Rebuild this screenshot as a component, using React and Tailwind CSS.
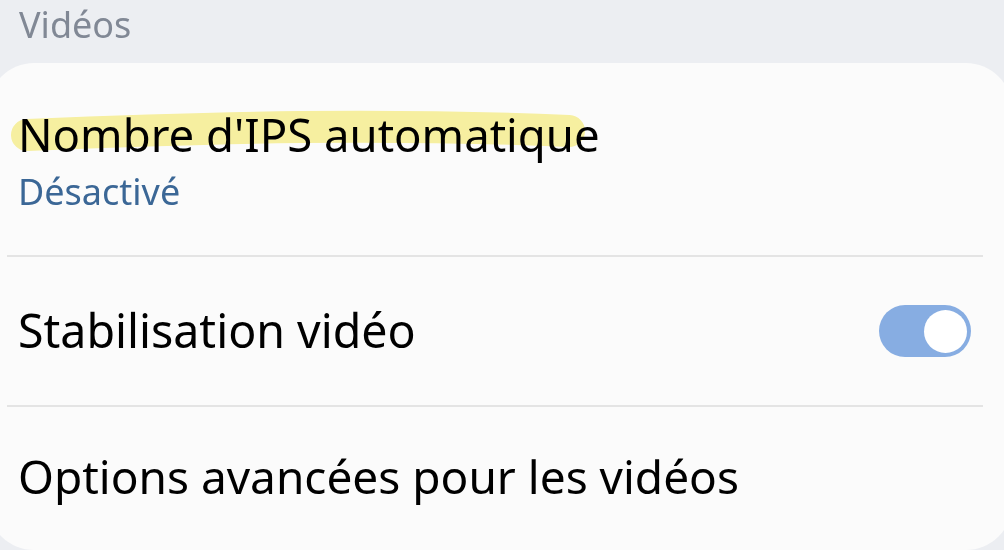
export default function App() {
  return (
    <div
      className="w-[1004px] h-[550px] overflow-hidden bg-[#eceef2] flex flex-col"
      style={{ fontFamily: '"Noto Sans", "Open Sans", sans-serif' }}
    >
      <div className="h-[63px] pl-[19px] text-[36px] leading-[50px] text-[#818895]">Vidéos</div>

      <div className="ml-[-12px] mr-[-8px] flex-1 rounded-[46px] bg-[#fbfbfb] flex flex-col">
        {/* first row */}
        <div className="relative h-[192px] pl-[30px] pt-[40px] flex flex-col">
          <svg className="absolute left-[12px] top-[40px] mix-blend-multiply" width="600" height="70" viewBox="0 0 600 70">
            <path
              d="M 27 32 C 120 28, 210 25, 300 24 C 400 23, 500 25, 569 28"
              fill="none"
              stroke="#faf3a3"
              strokeWidth="32"
              strokeLinecap="round"
            />
          </svg>
          <div className="relative text-[45.5px] leading-[62px] text-black">Nombre d'IPS automatique</div>
          <div className="mt-[3px] text-[36px] leading-[48px] text-[#3b6796]">Désactivé</div>
        </div>
        <div className="ml-[19px] mr-[29px] h-[2px] bg-[#e4e4e4]" />

        {/* second row */}
        <div className="h-[148px] pl-[30px] pr-[41px] flex items-center justify-between">
          <div className="text-[46.5px] text-black">Stabilisation vidéo</div>
          <div className="w-[92px] h-[52px] rounded-full bg-[#87ade2] flex items-center justify-end pr-[4px]">
            <div className="w-[43px] h-[43px] rounded-full bg-white" />
          </div>
        </div>
        <div className="ml-[19px] mr-[29px] h-[2px] bg-[#e4e4e4]" />

        {/* third row */}
        <div className="flex-1 pl-[30px] flex items-center pb-[4px]">
          <div className="text-[46px] text-black">Options avancées pour les vidéos</div>
        </div>
      </div>
    </div>
  );
}
